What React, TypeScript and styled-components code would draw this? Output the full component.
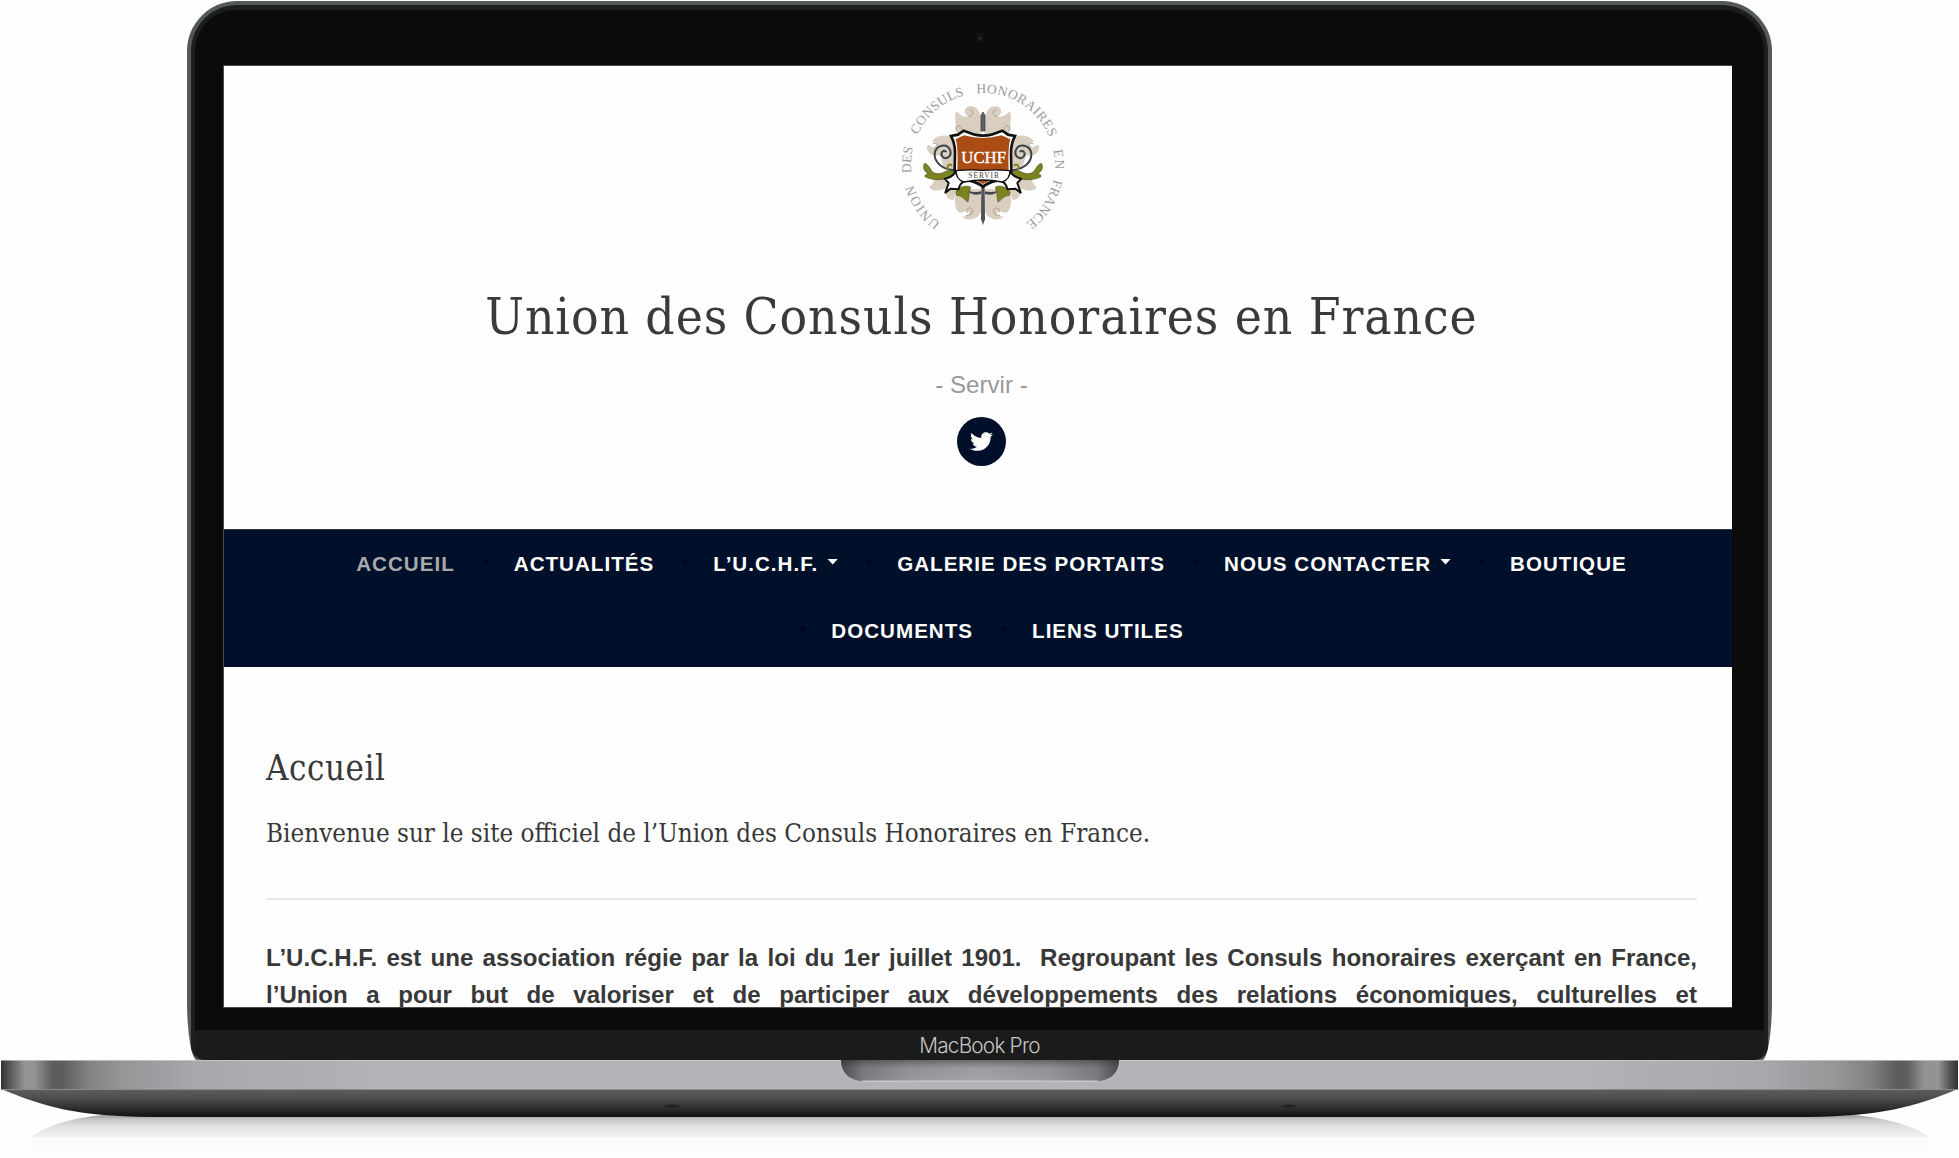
import React from 'react';
import styled, { createGlobalStyle } from 'styled-components';
import { FaTwitter } from 'react-icons/fa';

const serif = "'DejaVu Serif Condensed', 'DejaVu Serif', serif";
const sans = "'Liberation Sans', Arial, sans-serif";

const Global = createGlobalStyle`
  * { box-sizing: border-box; }
  html, body { margin: 0; padding: 0; background: #fff; overflow: hidden; }
`;

const Scene = styled.div`
  width: 1959px;
  height: 1158px;
  display: flex;
  flex-direction: column;
  align-items: center;
  background: #fefefe;
  overflow: hidden;
`;

const Lid = styled.div`
  width: 1585px;
  height: 1059px;
  margin-top: 1px;
  flex: none;
  display: flex;
  background: #55585a;
  border-radius: 50px 50px 10px 10px / 50px 50px 60px 60px;
  padding: 4px 4px 0;
`;

const Rim = styled.div`
  flex: 1;
  display: flex;
  background: #1d1e1e;
  border-radius: 46px 46px 14px 14px;
  padding: 5px 4px 0;
`;

const Bezel = styled.div`
  flex: 1;
  display: flex;
  flex-direction: column;
  align-items: center;
  background: #0b0b0b;
  border-radius: 41px 41px 16px 16px;
  overflow: hidden;
`;

const CameraBar = styled.div`
  height: 55px;
  flex: none;
  display: flex;
  align-items: center;
  justify-content: center;
`;

const Camera = styled.div`
  width: 10px;
  height: 10px;
  border-radius: 50%;
  background: radial-gradient(circle, #23262c 0 20%, #101114 30% 60%, #17181a 75%);
`;

const Screen = styled.main`
  width: 1509px;
  height: 943px;
  flex: none;
  margin-left: -4px;
  background: #fefefe;
  border: 1px solid #4a4a4c;
  border-width: 1px 0 1px 1px;
  overflow: hidden;
  display: flex;
  flex-direction: column;
`;

const Header = styled.header`
  height: 463px;
  flex: none;
  display: flex;
  flex-direction: column;
  align-items: center;
  padding-left: 7px;
`;

const Crest = styled.svg`
  width: 210px;
  height: 185px;
  flex: none;
  margin-left: 7px;
`;

const SiteTitle = styled.h1`
  margin: 33px 0 0;
  font: 400 51px/66px ${serif};
  letter-spacing: 0.9px;
  color: #3a3a3a;
  white-space: nowrap;
`;

const Tagline = styled.p`
  margin: 17px 0 0;
  font: 400 24.1px/36px ${sans};
  color: #999;
`;

const Social = styled.a`
  width: 49px;
  height: 49px;
  margin-top: 14px;
  border-radius: 50%;
  background: #00102a;
  color: #fff;
  display: flex;
  align-items: center;
  justify-content: center;
`;

const Nav = styled.nav`
  height: 138px;
  flex: none;
  background: #00102a;
  border-top: 1px solid #33394c;
  display: flex;
  flex-direction: column;
  align-items: center;
`;

const NavRow = styled.div<{ $shift: number }>`
  height: 67px;
  display: flex;
  align-items: center;
  margin-left: ${(p) => p.$shift}px;
`;

const NavItem = styled.a<{ $active?: boolean }>`
  display: flex;
  align-items: center;
  font: 700 20.6px/30px ${sans};
  letter-spacing: 1px;
  white-space: nowrap;
  color: ${(p) => (p.$active ? '#a9a9ab' : '#fff')};
`;

const Caret = styled.span`
  width: 11px;
  height: 6px;
  margin: -4px 0 0 9px;
  background: #fff;
  clip-path: polygon(0 0, 100% 0, 50% 100%);
`;

const Dot = styled.span`
  width: 6px;
  height: 6px;
  margin: -3px 25px 0 28px;
  border-radius: 50%;
  background: #000720;
`;

const Article = styled.article`
  padding: 79px 35px 0 42px;
  color: #383838;
`;

const PageTitle = styled.h2`
  margin: 0;
  font: 400 34.5px/44px ${serif};
  letter-spacing: 0.6px;
`;

const Welcome = styled.p`
  margin: 25px 0 0;
  font: 400 25.8px/36px ${serif};
  white-space: nowrap;
`;

const Divider = styled.hr`
  margin: 47px 0 0;
  border: 0;
  height: 2px;
  background: #e8e8e8;
`;

const Body = styled.p`
  margin: 38.6px 0 0;
  font: 700 24.1px/37.5px ${sans};
  display: flex;
  flex-direction: column;
`;

const Line = styled.span`
  text-align: justify;
  text-align-last: justify;
`;

const Chin = styled.div`
  width: 100%;
  flex: 1;
  display: flex;
  flex-direction: column;
  padding-top: 22px;
`;

const Brand = styled.div`
  flex: 1;
  display: flex;
  align-items: center;
  justify-content: center;
  padding-top: 1px;
  background: #1b1b1b;
  color: #c4c4c4;
  font: 300 20.8px/28px Inter, sans-serif;
  letter-spacing: -0.8px;
`;

const BaseArt = styled.svg`
  width: 1959px;
  height: 98px;
  flex: none;
  display: block;
`;

const R = 72;
const words: [string, number, number][] = [
  ['UNION', 216, 254],
  ['DES', 263.5, 284],
  ['CONSULS', 294.5, 344.5],
  ['HONORAIRES', 354.5, 427],
  ['EN', 437.5, 453],
  ['FRANCE', 461, 503],
];
const arc = (deg: number) => ((deg - 180) * Math.PI * R) / 180;

function Leaves() {
  return (
    <g>
      <path
        d="M304 175 C304 135 290 118 268 121 C250 124 250 146 266 151 C252 156 240 148 230 136 C220 150 230 170 226 190 L240 215 H304Z"
        fill="#d9cebf"
      />
      <path
        d="M215 212 C195 204 165 208 156 228 C172 226 174 240 164 244 C150 244 148 232 140 240 C140 262 160 274 178 268 C190 285 182 305 205 312 L240 300Z"
        fill="#d9cebf"
      />
      <path
        d="M160 338 C166 352 150 356 148 366 C165 378 185 374 196 366 C196 392 204 402 220 402 L240 350 L200 330Z"
        fill="#d9cebf"
      />
      <path
        d="M304 370 H228 C222 412 224 430 238 440 C252 440 262 430 268 440 C266 452 252 450 248 452 C258 466 300 464 304 430Z"
        fill="#d9cebf"
      />
      <path
        d="M266 151 C280 150 284 134 270 132 M245 190 C240 170 222 182 232 196 M164 244 C178 238 168 226 158 234 M258 448 C274 452 286 430 270 426 C260 426 256 436 264 440"
        fill="none"
        stroke="#a99f92"
        strokeWidth="3"
      />
      <path
        d="M226 322 C205 300 190 330 166 322 C150 318 152 298 134 292 C126 306 134 318 146 324 C134 324 132 332 138 334 C165 346 200 340 226 334Z"
        fill="#7c8420"
        stroke="#4e5222"
        strokeWidth="2"
      />
      <path
        d="M228 378 C236 362 262 356 272 364 C266 380 268 392 264 408 C252 402 250 390 230 388Z"
        fill="#7c8420"
        stroke="#4e5222"
        strokeWidth="2"
      />
      <path
        d="M224 312 C190 312 162 290 164 262 C168 236 202 230 211 254 C216 272 196 284 186 270 C180 258 192 250 199 258"
        fill="none"
        stroke="#3d434a"
        strokeWidth="6"
      />
      <path d="M206 314 C196 304 208 288 216 300" fill="none" stroke="#7c8420" strokeWidth="6" />
    </g>
  );
}

function RibbonTail() {
  return (
    <path
      d="M228 318 Q212 336 194 338 L206 351 L196 380 L212 368 L236 370 Q240 350 254 346Z"
      fill="#fff"
      stroke="#111"
      strokeWidth="6"
      strokeLinejoin="round"
    />
  );
}

function CrestArt() {
  return (
    <Crest viewBox="0 0 210 185">
      <defs>
        <path id="ring" d={`M103 ${99 + R} a${R} ${R} 0 0 1 0 ${-2 * R} a${R} ${R} 0 0 1 0 ${2 * R}`} />
      </defs>
      <g fontFamily="'Liberation Serif', serif" fontSize="13.5" fill="#9b9b9f">
        {words.map(([w, a, b]) => (
          <text key={w} textLength={arc(b) - arc(a)} lengthAdjust="spacing">
            <textPath href="#ring" startOffset={arc(a)} textLength={arc(b) - arc(a)}>
              {w}
            </textPath>
          </text>
        ))}
      </g>
      <g transform="scale(.33333)">
        <Leaves />
        <g transform="translate(618 0) scale(-1 1)">
          <Leaves />
        </g>
        <path d="M303 195 V148 L309 138 L315 148 V195Z" fill="#5d6066" stroke="#34363a" strokeWidth="2" />
        <path
          d="M303 368 V384 C285 390 272 384 264 376 C280 378 292 380 303 376 Z M315 368 V384 C333 390 346 384 354 376 C338 378 326 380 315 376Z"
          fill="#45494f"
        />
        <path d="M304 360 H314 L315 460 L309 477 L303 460Z" fill="#4f5359" />
        <path
          d="M251 194 L284 206 Q309 212 334 206 L367 194 L384 206 L405 210 C388 242 394 262 394 316 Q385 338 350 344 Q324 350 309 362 Q294 350 268 344 Q233 338 224 316 C224 262 230 242 213 210 L234 206Z"
          fill="#fff"
          stroke="#121212"
          strokeWidth="8"
        />
        <path
          d="M252 208 Q309 224 364 208 L391 220 Q383 245 386 312 Q380 334 346 338 Q324 344 309 354 Q294 344 272 338 Q238 334 232 312 Q235 245 227 220Z"
          fill="#ab4c14"
        />
        <RibbonTail />
        <g transform="translate(618 0) scale(-1 1)">
          <RibbonTail />
        </g>
        <path
          d="M228 314 Q268 310 309 313 Q350 310 390 314 Q390 340 366 348 Q338 342 309 342 Q280 342 252 348 Q228 340 228 314Z"
          fill="#fff"
          stroke="#111"
          strokeWidth="4"
          strokeLinejoin="round"
        />
        <text
          x="311"
          y="292"
          textAnchor="middle"
          fontFamily="'Liberation Serif', serif"
          fontSize="47"
          fill="#fff"
          stroke="#fff"
          strokeWidth="1"
          textLength="134"
          lengthAdjust="spacingAndGlyphs"
        >
          UCHF
        </text>
        <text
          x="311"
          y="335"
          textAnchor="middle"
          fontFamily="'Liberation Serif', serif"
          fontSize="22"
          fill="#444"
          textLength="92"
        >
          SERVIR
        </text>
      </g>
    </Crest>
  );
}

function Base() {
  return (
    <BaseArt viewBox="0 0 1959 98">
      <defs>
        <linearGradient id="metal">
          <stop offset="0" stopColor="#303234" />
          <stop offset=".004" stopColor="#505254" />
          <stop offset=".012" stopColor="#929496" />
          <stop offset=".017" stopColor="#919395" />
          <stop offset=".026" stopColor="#5d5f61" />
          <stop offset=".031" stopColor="#5a5c5e" />
          <stop offset=".045" stopColor="#808284" />
          <stop offset=".062" stopColor="#959698" />
          <stop offset=".1" stopColor="#a7a8ab" />
          <stop offset=".2" stopColor="#b3b4b8" />
          <stop offset=".8" stopColor="#b3b4b8" />
          <stop offset=".9" stopColor="#a7a8ab" />
          <stop offset=".938" stopColor="#959698" />
          <stop offset=".955" stopColor="#808284" />
          <stop offset=".969" stopColor="#5a5c5e" />
          <stop offset=".974" stopColor="#5d5f61" />
          <stop offset=".983" stopColor="#919395" />
          <stop offset=".99" stopColor="#929496" />
          <stop offset=".996" stopColor="#505254" />
          <stop offset="1" stopColor="#303234" />
        </linearGradient>
        <linearGradient id="under" x2="0" y2="1">
          <stop offset="0" stopColor="#5c5e60" />
          <stop offset=".3" stopColor="#4e4f51" />
          <stop offset=".65" stopColor="#303132" />
          <stop offset="1" stopColor="#111" />
        </linearGradient>
        <linearGradient id="reflection" x2="0" y2="1">
          <stop offset="0" stopColor="#8f8f90" />
          <stop offset=".25" stopColor="#c9c9ca" />
          <stop offset=".55" stopColor="#e2e2e3" />
          <stop offset="1" stopColor="#f1f1f2" />
        </linearGradient>
        <linearGradient id="fade" x2="0" y2="1">
          <stop offset="0" stopColor="#fafafa" />
          <stop offset="1" stopColor="#fefefe" />
        </linearGradient>
        <linearGradient id="notch">
          <stop offset="0" stopColor="#4c4d4f" />
          <stop offset=".08" stopColor="#7d7e81" />
          <stop offset=".25" stopColor="#98999c" />
          <stop offset=".5" stopColor="#a5a6a9" />
          <stop offset=".75" stopColor="#98999c" />
          <stop offset=".92" stopColor="#7d7e81" />
          <stop offset="1" stopColor="#4c4d4f" />
        </linearGradient>
        <linearGradient id="notchShade" x2="0" y2="1">
          <stop offset="0" stopColor="#222" stopOpacity=".45" />
          <stop offset=".4" stopColor="#333" stopOpacity=".08" />
          <stop offset="1" stopColor="#333" stopOpacity="0" />
        </linearGradient>
      </defs>
      <path d="M32 77 C48 63 85 55 120 54 H1839 C1880 56 1913 65 1929 77Z" fill="url(#reflection)" />
      <path d="M32 77 H1929 V97 H32Z" fill="url(#fade)" />
      <path d="M1 29 C45 47 75 56 150 57 H1809 C1880 56 1915 47 1958 29Z" fill="url(#under)" />
      <rect x="1" width="1957" height="30" fill="url(#metal)" />
      <rect x="1" width="1957" height="1" fill="#d8d8da" opacity=".6" />
      <rect x="1" y="29" width="1957" height="1" fill="#8b8c8e" />
      <path d="M841 0 H1119 C1119 13 1110 21 1096 21 H864 C850 21 841 13 841 0Z" fill="url(#notch)" />
      <path d="M841 0 H1119 C1119 13 1110 21 1096 21 H864 C850 21 841 13 841 0Z" fill="url(#notchShade)" />
      <rect x="862" y="20.5" width="236" height="1.5" fill="#c8c9cc" />
      <ellipse cx="672" cy="46" rx="7" ry="1.5" fill="#222" />
      <ellipse cx="1289" cy="46" rx="7" ry="1.5" fill="#222" />
    </BaseArt>
  );
}

export default function App() {
  return (
    <>
      <Global />
      <Scene>
        <Lid>
          <Rim>
            <Bezel>
              <CameraBar>
                <Camera />
              </CameraBar>
              <Screen>
                <Header>
                  <CrestArt />
                  <SiteTitle>Union des Consuls Honoraires en France</SiteTitle>
                  <Tagline>- Servir -</Tagline>
                  <Social>
                    <FaTwitter size={23} />
                  </Social>
                </Header>
                <Nav>
                  <NavRow $shift={27}>
                    <NavItem $active>ACCUEIL</NavItem>
                    <Dot />
                    <NavItem>ACTUALITÉS</NavItem>
                    <Dot />
                    <NavItem>
                      L’U.C.H.F.
                      <Caret />
                    </NavItem>
                    <Dot />
                    <NavItem>GALERIE DES PORTAITS</NavItem>
                    <Dot />
                    <NavItem>
                      NOUS CONTACTER
                      <Caret />
                    </NavItem>
                    <Dot />
                    <NavItem>BOUTIQUE</NavItem>
                  </NavRow>
                  <NavRow $shift={0}>
                    <Dot />
                    <NavItem>DOCUMENTS</NavItem>
                    <Dot />
                    <NavItem>LIENS UTILES</NavItem>
                  </NavRow>
                </Nav>
                <Article>
                  <PageTitle>Accueil</PageTitle>
                  <Welcome>Bienvenue sur le site officiel de l’Union des Consuls Honoraires en France.</Welcome>
                  <Divider />
                  <Body>
                    <Line>
                      L’U.C.H.F. est une association régie par la loi du 1er juillet 1901.&nbsp; Regroupant les Consuls honoraires exerçant en France,
                    </Line>
                    <Line>
                      l’Union a pour but de valoriser et de participer aux développements des relations économiques, culturelles et
                    </Line>
                  </Body>
                </Article>
              </Screen>
              <Chin>
                <Brand>MacBook Pro</Brand>
              </Chin>
            </Bezel>
          </Rim>
        </Lid>
        <Base />
      </Scene>
    </>
  );
}
